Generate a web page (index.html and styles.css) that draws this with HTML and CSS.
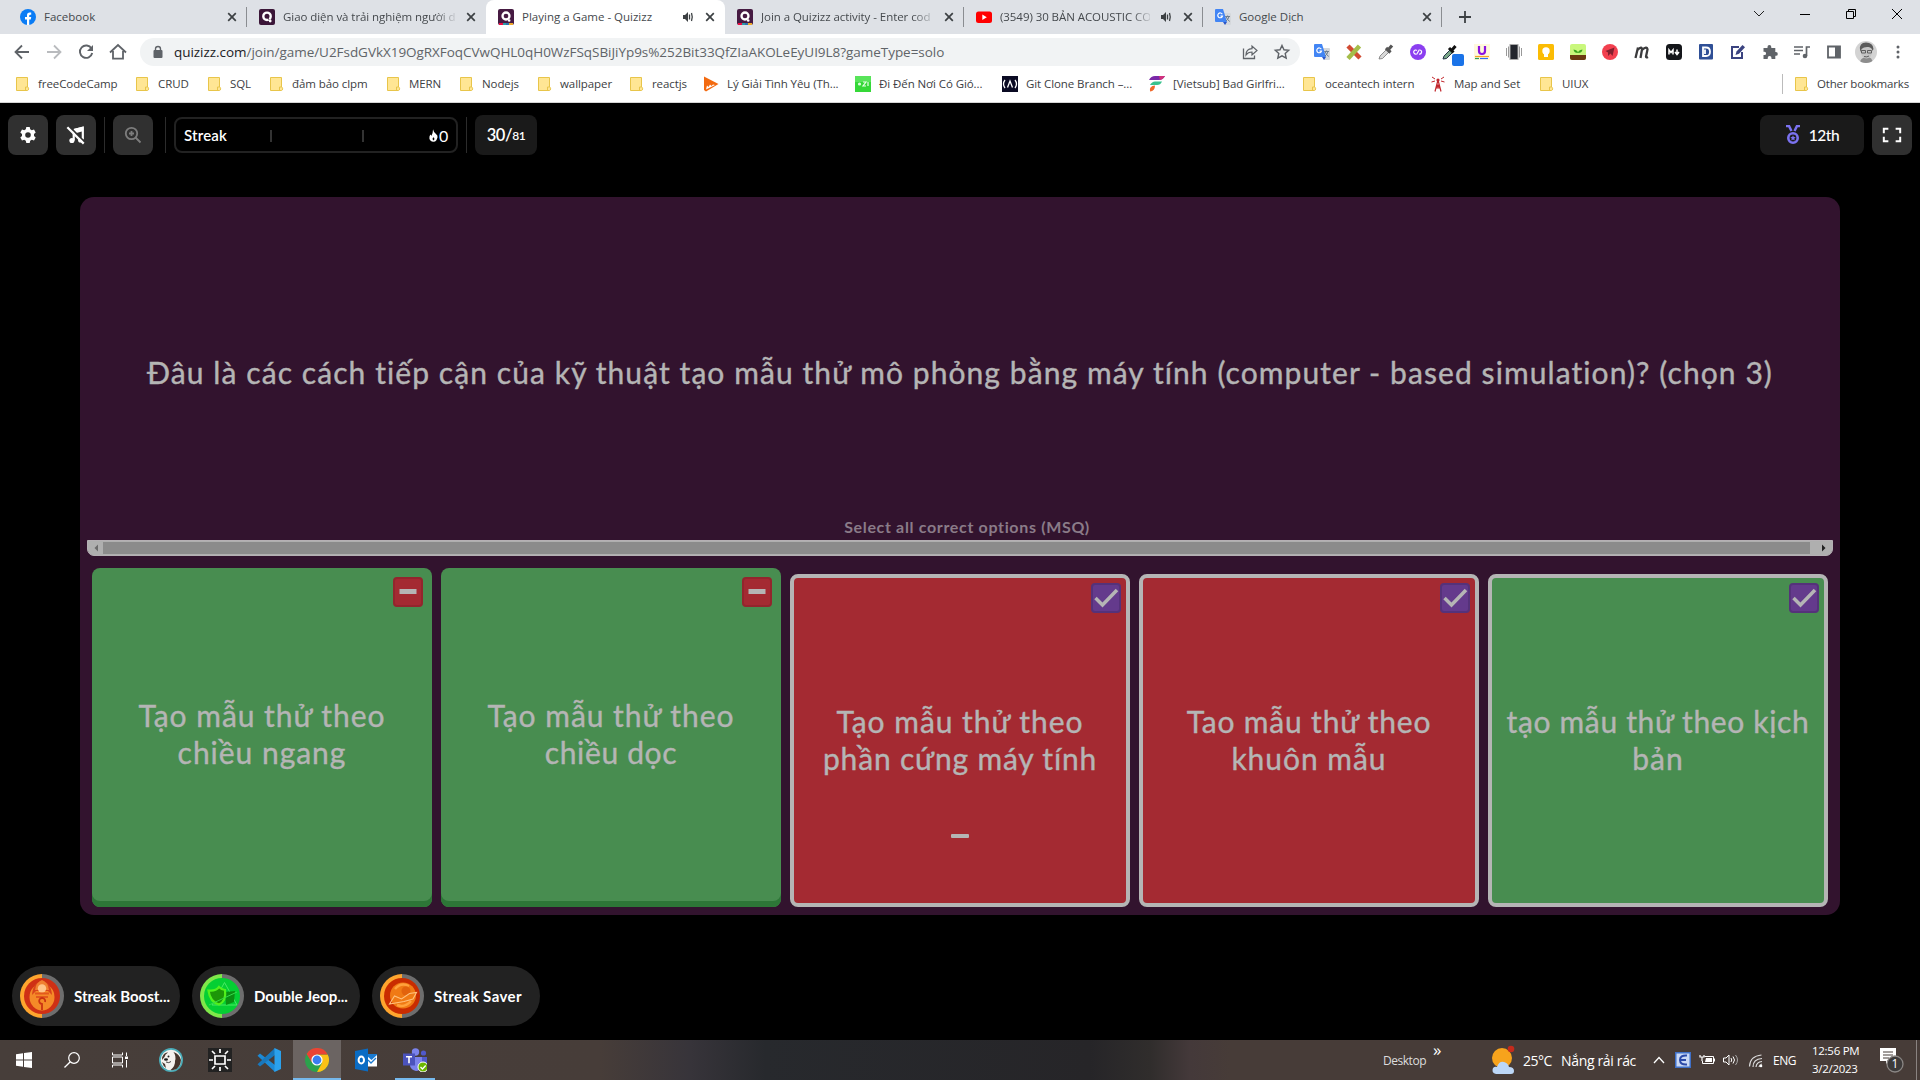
FILE: index.html
```html
<!DOCTYPE html>
<html lang="vi">
<head>
<meta charset="utf-8">
<title>Playing a Game - Quizizz</title>
<link rel="stylesheet" href="styles.css">
</head>
<body>
<svg class="defs" aria-hidden="true">
  <symbol id="folder" viewBox="0 0 16 16"><path d="M.5 1.500h11v9.500c1.500 0 1.500 3.500 0 3.500H.5z" fill="#ffe694" stroke="#e8c54a"/><path d="M9.500 14.500v-3.500h2" fill="none" stroke="#e8c54a"/></symbol>
  <symbol id="close" viewBox="0 0 16 16"><path d="M4.200 4.200l7.600 7.600M11.800 4.200l-7.600 7.600" stroke="#3c4043" stroke-width="1.700"/></symbol>
  <symbol id="audio" viewBox="0 0 16 16"><path d="M3 6v4h2l3 3V3L5 6z" fill="#3c4043"/><path d="M9.500 5.500v5M11.500 4q1.500 4 0 8" fill="none" stroke="#3c4043" stroke-width="1.300"/></symbol>
  <symbol id="quizizz" viewBox="0 0 16 16"><rect width="16" height="16" rx="2" fill="#3b1638"/><circle cx="8" cy="7.300" r="3.700" fill="none" stroke="#fff" stroke-width="2.400"/><path d="M8 8l4 5" stroke="#3b1638" stroke-width="1"/><circle cx="11.200" cy="12" r="1.400" fill="#fff"/></symbol>
  <symbol id="quizizz-live" viewBox="0 0 16 16"><rect width="16" height="16" rx="2" fill="#461a42"/><circle cx="8" cy="7" r="3.500" fill="none" stroke="#fff" stroke-width="2.300"/><circle cx="11.200" cy="11.500" r="1.300" fill="#fff"/><path d="M1 15h4" stroke="#ec0b43" stroke-width="2"/><path d="M5 15h3" stroke="#2d9da6" stroke-width="2"/><path d="M8 15h3" stroke="#2d70ae" stroke-width="2"/><path d="M11 15h4" stroke="#efa929" stroke-width="2"/></symbol>
  <symbol id="translate" viewBox="0 0 16 16"><path d="M7 4h8q1 0 1 1v10q0 1-1 1H10z" fill="#d5d8dc"/><path d="M1 0h7l4 13H1q-1 0-1-1V1q0-1 1-1z" fill="#4285f4"/><path d="M8 13h4l-2 3z" fill="#2a56c6"/><path d="M7.300 5.200A2.400 2.400 0 1 0 7.500 7H5.400" fill="none" stroke="#fff" stroke-width="1.200"/><path d="M10.200 7.500h4.800M12.600 6.500v1M14 7.500q-.7 3-3 4.500M11.300 8q1 3 3.500 4.500" fill="none" stroke="#6d7f92"/></symbol>
  <symbol id="minus" viewBox="0 0 26 26"><path d="M4.500 12.500h17" stroke="#b5b5b5" stroke-width="5"/></symbol>
  <symbol id="check" viewBox="0 0 26 26"><path d="M2.500 13l7 7L24 5" fill="none" stroke="#b5b5b5" stroke-width="3.500"/></symbol>
</svg>

<div class="screen">
  <header class="tabstrip">
    <div class="tab"><svg class="i16" viewBox="0 0 16 16"><circle cx="8" cy="8" r="8" fill="#0a7cf5"/><path d="M7 16v-5.500H5V8h2V6.300Q7 3.500 9.700 3.500l1.500.1V5.700h-1Q9.200 5.700 9.200 6.800V8h2l-.4 2.500H9.200V16z" fill="#fff"/></svg><span class="title">Facebook</span><svg class="i16"><use href="#close"/></svg></div>
    <div class="tab"><svg class="i16"><use href="#quizizz"/></svg><span class="title fade">Giao diện và trải nghiệm người d</span><svg class="i16"><use href="#close"/></svg></div>
    <div class="tab active"><svg class="i16"><use href="#quizizz-live"/></svg><span class="title">Playing a Game - Quizizz</span><svg class="i16 sound"><use href="#audio"/></svg><svg class="i16"><use href="#close"/></svg></div>
    <div class="tab"><svg class="i16"><use href="#quizizz-live"/></svg><span class="title fade">Join a Quizizz activity - Enter cod</span><svg class="i16"><use href="#close"/></svg></div>
    <div class="tab"><svg class="i16" viewBox="0 0 16 16"><rect y="2.500" width="16" height="11.500" rx="2.500" fill="#f00"/><path d="M6.300 5.500v5.500l4.500-2.700z" fill="#fff"/></svg><span class="title fade">(3549) 30 BẢN ACOUSTIC CO</span><svg class="i16 sound"><use href="#audio"/></svg><svg class="i16"><use href="#close"/></svg></div>
    <div class="tab"><svg class="i16"><use href="#translate"/></svg><span class="title">Google Dịch</span><svg class="i16"><use href="#close"/></svg></div>
    <svg class="newtab" viewBox="0 0 16 16"><path d="M8 2v12M2 8h12" stroke="#3c4043" stroke-width="1.800"/></svg>
    <div class="winctl">
      <svg viewBox="0 0 12 12"><path d="M1 3l5 5 5-5" fill="none" stroke="#222"/></svg>
      <svg viewBox="0 0 12 12"><path d="M1 6.500h10" stroke="#000"/></svg>
      <svg viewBox="0 0 12 12"><path d="M1.500 3.500h7v7h-7zM3.500 3.500v-2h7v7h-2" fill="none" stroke="#000"/></svg>
      <svg viewBox="0 0 12 12"><path d="M1 1l10 10M11 1L1 11" stroke="#000"/></svg>
    </div>
  </header>

  <div class="toolbar">
    <div class="nav">
      <svg class="i16" viewBox="0 0 16 16"><path d="M15 8H2M8 1.500L1.500 8 8 14.500" fill="none" stroke="#5f6368" stroke-width="1.800"/></svg>
      <svg class="i16" viewBox="0 0 16 16"><path d="M1 8h13M8 1.500L14.500 8 8 14.500" fill="none" stroke="#b9bbbe" stroke-width="1.800"/></svg>
      <svg class="i16" viewBox="0 0 16 16"><path d="M13.500 4.500A6.200 6.200 0 1 0 14.200 9" fill="none" stroke="#5f6368" stroke-width="1.900"/><path d="M15 1v6H9z" fill="#5f6368"/></svg>
      <svg class="i16" viewBox="0 0 16 16"><path d="M0 8.500L8 1l8 7.500M3 7v7.700h10V7" fill="none" stroke="#5f6368" stroke-width="1.800"/></svg>
    </div>
    <div class="omnibox">
      <svg class="lock" viewBox="0 0 12 14"><rect x="1.500" y="5" width="9" height="8" rx="1" fill="#5f6368"/><path d="M3.500 5.500V4a2.500 2.500 0 0 1 5 0v1.500" fill="none" stroke="#5f6368" stroke-width="1.400"/></svg>
      <span class="url"><b>quizizz.com</b>/join/game/U2FsdGVkX19OgRXFoqCVwQHL0qH0WzFSqSBiJiYp9s%252Bit33QfZIaAKOLeEyUI9L8?gameType=solo</span>
      <svg class="i16" viewBox="0 0 16 16"><path d="M1.500 4.500v10h11v-3" fill="none" stroke="#5f6368" stroke-width="1.300"/><path d="M4 11q0-6 6-6.300V2l5 4.500-5 4.500V8Q6 8 4 11z" fill="none" stroke="#5f6368" stroke-width="1.200"/></svg>
      <svg class="i16" viewBox="0 0 16 16"><path d="M8 1.500l2 4.300 4.700.5-3.500 3.200 1 4.700L8 11.800l-4.200 2.400 1-4.700L1.300 6.300 6 5.800z" fill="none" stroke="#5f6368" stroke-width="1.400"/></svg>
    </div>
    <div class="exts">
      <svg class="i16"><use href="#translate"/></svg>
      <svg class="i16" viewBox="0 0 16 16"><path d="M2 2l12 12" stroke="#d14b32" stroke-width="4.500"/><path d="M13.500 2L2 14.500" stroke="#a5bd4a" stroke-width="4.500"/></svg>
      <svg class="i16" viewBox="0 0 16 16"><path d="M1 15l1-3 7-7 2.500 2.500-7 7z" fill="#d8d8d8" stroke="#777" stroke-width=".8"/><path d="M8 4l4.500 4.500M10 6l4-4.500" stroke="#555" stroke-width="3.200"/></svg>
      <svg class="i16" viewBox="0 0 16 16"><circle cx="8" cy="8" r="8" fill="#8b3ff0"/><path d="M9.500 5.500L6.500 10.500M7 6.500A2 2 0 1 0 6 10M9 10a2 2 0 1 0 1-4" fill="none" stroke="#fff" stroke-width="1.200"/></svg>
      <svg class="i16" viewBox="0 0 16 16"><path d="M1 15l1-3 6-6 2.500 2.500-6 6z" fill="#7ba889" stroke="#234" /><path d="M7 4l4.500 4.500M10 6l3.500-4" stroke="#111" stroke-width="3"/><rect x="10" y="10" width="12" height="12" rx="2" fill="#1a73e8"/></svg>
      <svg class="i16" viewBox="0 0 16 16"><rect width="16" height="16" fill="#fff9dc"/><path d="M5 2v5q0 3 3 3t3-3V2" fill="none" stroke="#8a12e0" stroke-width="2.200"/><path d="M1 12.500h14" stroke="#f5a623" stroke-width="1.200"/><path d="M1 14.500h4" stroke="#2b9c5a" stroke-width="1.200"/><path d="M6 14.500h8" stroke="#2a6df4" stroke-width="1.200"/></svg>
      <svg class="i16" viewBox="0 0 16 16"><path d="M.5 4v8M2.500 2.500v11M13.500 2.500v11M15.500 4v8" stroke="#999"/><rect x="4" y=".5" width="8" height="15" fill="#23262d" stroke="#aaa"/></svg>
      <svg class="i16" viewBox="0 0 16 16"><rect width="16" height="16" rx="1.500" fill="#fbbc04"/><circle cx="8" cy="7" r="3.700" fill="#fff"/><path d="M6 10h4v3H6z" fill="#fff"/></svg>
      <svg class="i16" viewBox="0 0 16 16"><rect width="16" height="16" rx="2" fill="#c9f77c"/><path d="M0 11h16v3q0 2-2 2H2q-2 0-2-2z" fill="#6b3a12"/><path d="M8 11V9Q4 9 3.500 5.500 8 6 8 9q0-3 4.500-3.500Q12 9 8 9" fill="#3ca51d"/></svg>
      <svg class="i16" viewBox="0 0 16 16"><circle cx="8" cy="8" r="8" fill="#f2404f"/><path d="M12.500 3.500L10.500 12l-2-2.500L6 12V8.500L3.500 7z" fill="#84202e"/></svg>
      <svg class="i16" viewBox="0 0 16 16"><path d="M1.500 14L4 3.500M3.500 6Q8 1.500 8 5.500L6.500 14M8 6q5-4.500 5.500-.5L12 12.500q0 1.500 2 .5" fill="none" stroke="#3b3b3d" stroke-width="2.300"/></svg>
      <svg class="i16" viewBox="0 0 16 16"><rect width="16" height="16" rx="3.500" fill="#14161a"/><path d="M3 10.500V6l2 2.500L7 6v4.500M11 5.500v4M9 8l2 2.500L13 8" fill="none" stroke="#fff" stroke-width="1.500"/></svg>
      <svg class="i16" viewBox="0 0 16 16"><rect x="1" width="14" height="15.500" rx="1" fill="#2f4f96"/><path d="M5 3.500h3q4 0 4 4.300T8 12H5zM7 5.500v4.600" fill="none" stroke="#fff" stroke-width="1.800"/></svg>
      <svg class="i16" viewBox="0 0 16 16"><path d="M9 3H2v11h10V8" fill="none" stroke="#3a4380" stroke-width="2"/><path d="M5.500 11l1-3.500L12.500 1 15 3.200 9 9.800z" fill="#3a4380"/></svg>
      <svg class="i16" viewBox="0 0 16 16"><path d="M1.500 4h4V3a1.900 1.900 0 0 1 3.800 0v1h4v4h.6a1.900 1.900 0 0 1 0 3.800h-.6V15H9.500v-1a1.900 1.900 0 0 0-3.800 0v1H1.500v-4h1a1.600 1.600 0 0 0 0-3.200h-1z" fill="#5f6368"/></svg>
      <svg class="i16" viewBox="0 0 16 16"><path d="M0 3h9M0 6.500h9M0 10h6" stroke="#5f6368" stroke-width="1.700"/><path d="M12.500 12V3H16" fill="none" stroke="#5f6368" stroke-width="1.700"/><circle cx="11" cy="12" r="2.300" fill="#5f6368"/></svg>
      <svg class="i16" viewBox="0 0 16 16"><path d="M2 2.500h12v11H2z" fill="none" stroke="#5f6368" stroke-width="1.800"/><path d="M9 2h5v12H9z" fill="#5f6368"/></svg>
      <svg class="avatar" viewBox="0 0 22 22"><clipPath id="av"><circle cx="11" cy="11" r="11"/></clipPath><g clip-path="url(#av)"><path d="M0 0h22v22H0z" fill="#d3d3d3"/><path d="M5 22q0-5 6-6t7 6z" fill="#8d8d8d"/><ellipse cx="11.500" cy="10.500" rx="5.700" ry="7" fill="#c4c4c4"/><path d="M5 9Q4 1.500 11 1.500T18.500 8l-1 2Q17 6.500 13.500 6 9 5.500 6.500 8L6 11z" fill="#5a5a5a"/><path d="M6.500 9.500h4v2.500h-4zM12.500 9.500h4v2.500h-4zM9 15.500q3 1 5-.5" fill="none" stroke="#555" stroke-width=".9"/></g></svg>
      <svg class="i16" viewBox="0 0 16 16"><circle cx="8" cy="3" r="1.500" fill="#5f6368"/><circle cx="8" cy="8" r="1.500" fill="#5f6368"/><circle cx="8" cy="13" r="1.500" fill="#5f6368"/></svg>
    </div>
  </div>

  <nav class="bookmarks">
    <a class="bm b1"><svg class="i16"><use href="#folder"/></svg><span>freeCodeCamp</span></a>
    <a class="bm b2"><svg class="i16"><use href="#folder"/></svg><span>CRUD</span></a>
    <a class="bm b3"><svg class="i16"><use href="#folder"/></svg><span>SQL</span></a>
    <a class="bm b4"><svg class="i16"><use href="#folder"/></svg><span>đảm bảo clpm</span></a>
    <a class="bm b5"><svg class="i16"><use href="#folder"/></svg><span>MERN</span></a>
    <a class="bm b6"><svg class="i16"><use href="#folder"/></svg><span>Nodejs</span></a>
    <a class="bm b7"><svg class="i16"><use href="#folder"/></svg><span>wallpaper</span></a>
    <a class="bm b8"><svg class="i16"><use href="#folder"/></svg><span>reactjs</span></a>
    <a class="bm site b9"><svg class="i16" viewBox="0 0 16 16"><path d="M1 .5L15.500 8 3 15.500 1 14z" fill="#f36a10"/><path d="M3 13.500l1-4 1.500 1.500L7 8.500 8.500 10 10 8.500 12 9z" fill="#fff"/></svg><span>Lý Giải Tình Yêu (Th...</span></a>
    <a class="bm site b10"><svg class="i16" viewBox="0 0 16 16"><path d="M0 0h16v16H0z" fill="#35d838"/><path d="M0 0h16v6H0z" fill="#58e45a"/><circle cx="4.500" cy="8" r="1.600" fill="#d9ffda"/><path d="M8 6h3l-3 4h3M13 6v4" fill="none" stroke="#e6ffe6" stroke-width="1.200"/></svg><span>Đi Đến Nơi Có Gió...</span></a>
    <a class="bm site b11"><svg class="i16" viewBox="0 0 16 16"><path d="M0 0h16v16H0z" fill="#0a0a23"/><path d="M3 4Q0 8 3 12M13 4q3 4 0 8M5.500 11.500L8 5l2.500 6.500" fill="none" stroke="#fff" stroke-width="1.300"/></svg><span>Git Clone Branch –...</span></a>
    <a class="bm site b12"><svg class="i16" viewBox="0 0 16 16"><path d="M0 4Q2 0 6 0h10q-2 4-6 4z" fill="#7a28a8"/><path d="M10 0h6q-2 3.500-5 4z" fill="#d2327c"/><path d="M1 9q2-3.500 5-3.500h7Q11.500 9 8 9z" fill="#39c28d"/><path d="M1 15q-1-5 5-5.500Q6 15 1 15.500z" fill="#f0692c"/></svg><span>[Vietsub] Bad Girlfri...</span></a>
    <a class="bm b13"><svg class="i16"><use href="#folder"/></svg><span>oceantech intern</span></a>
    <a class="bm site b14"><svg class="i16" viewBox="0 0 16 16"><path d="M8 4L5 15.500M8 4l3 11.500M6.500 9h3M6 12h4M7 9l3 3M9 9l-3 3" stroke="#c2272d" stroke-width="1.200"/><path d="M2 1l3 2M1.500 6L5 5M14 1l-3 2M14.500 6L11 5" stroke="#c2272d"/><circle cx="8" cy="4" r="1.600" fill="#c2272d"/></svg><span>Map and Set</span></a>
    <a class="bm b15"><svg class="i16"><use href="#folder"/></svg><span>UIUX</span></a>
    <a class="bm other"><svg class="i16"><use href="#folder"/></svg><span>Other bookmarks</span></a>
  </nav>

  <main class="game">
    <div class="gamebar">
      <div class="btn"><svg viewBox="0 0 20 20"><path d="M8.300 2h3.400l.5 2.300 1.600.9 2.200-.8 1.700 3-1.700 1.600v2l1.700 1.600-1.700 3-2.200-.8-1.600.9-.5 2.300H8.300l-.5-2.300-1.600-.9-2.200.8-1.700-3L4 11V9L2.300 7.400l1.700-3 2.200.8 1.600-.9z" fill="#fff"/><circle cx="10" cy="10" r="2.800" fill="#303030"/></svg></div>
      <div class="btn"><svg viewBox="0 0 22 22"><path d="M8.500 5.500L18.500 3v13M8.500 6v11" fill="none" stroke="#fff" stroke-width="2.400"/><path d="M8.500 4.500L18.500 2v5l-8 2z" fill="#fff"/><circle cx="6.500" cy="17" r="2.800" fill="#fff"/><circle cx="16" cy="16.500" r="2.800" fill="#fff"/><path d="M3 1l18 18" stroke="#303030" stroke-width="2"/><path d="M1.500 2.500l18 18" stroke="#fff" stroke-width="2.400"/></svg></div>
      <i class="sep"></i>
      <div class="btn"><svg viewBox="0 0 20 20"><circle cx="8.500" cy="8.500" r="5.700" fill="none" stroke="#7d7d7d" stroke-width="1.800"/><path d="M12.500 12.500l5 5M8.500 6v5M6 8.500h5" stroke="#7d7d7d" stroke-width="1.800"/></svg></div>
      <i class="sep wide"></i>
      <div class="streak"><span>Streak</span><i class="tick"></i><i class="tick"></i><svg viewBox="0 0 10 14"><path d="M4.500 0Q5 3 7.500 5T9.500 9 8 12.500 5 14 1.500 12.500.5 8.500Q1 6.500 2 6l.6 1.500Q4.500 4 4.500 0z" fill="#fff"/><path d="M5 9q2 2 0 3.500Q3 11 5 9z" fill="#000"/></svg><span class="score">0</span></div>
      <i class="sep"></i>
      <div class="count"><span class="now">30/</span><span class="total">81</span></div>
      <div class="rank"><svg viewBox="0 0 16 20"><path d="M1 1h3l2.500 5M15 1h-3L9.500 6" fill="none" stroke="#7b72f0" stroke-width="2.500"/><circle cx="8" cy="13" r="4.700" fill="none" stroke="#7b72f0" stroke-width="2.600"/><path d="M8 10.300l.8 1.800 1.900.2-1.400 1.300.4 1.900L8 14.600l-1.700.9.4-1.900-1.400-1.300 1.900-.2z" fill="#7b72f0"/></svg><span>12th</span></div>
      <div class="btn"><svg viewBox="0 0 22 22"><path d="M7 4H2v5M15 4h5v5M7 18H2v-5M15 18h5v-5" fill="none" stroke="#fff" stroke-width="2.200"/></svg></div>
    </div>

    <section class="quiz">
      <div class="question">Đâu là các cách tiếp cận của kỹ thuật tạo mẫu thử mô phỏng bằng máy tính (computer - based simulation)? (chọn 3)</div>
      <p class="hint">Select all correct options (MSQ)</p>
      <div class="scrollbar"><svg class="arrow" viewBox="0 0 16 16"><path d="M10 4.500v7L6.500 8z" fill="#6b6b6b"/></svg><div class="thumb"></div><svg class="arrow right" viewBox="0 0 16 16"><path d="M6 4.500v7L9.500 8z" fill="#222"/></svg></div>
      <div class="options">
        <article class="card green flat"><svg class="mark miss"><use href="#minus"/></svg><p>Tạo mẫu thử theo<br>chiều ngang</p></article>
        <article class="card green flat"><svg class="mark miss"><use href="#minus"/></svg><p>Tạo mẫu thử theo<br><span class="tight">chiều dọc</span></p></article>
        <article class="card red picked"><svg class="mark pick"><use href="#check"/></svg><p>Tạo mẫu thử theo<br><span class="snug">phần cứng máy tính</span></p><i class="dash"></i></article>
        <article class="card red picked"><svg class="mark pick"><use href="#check"/></svg><p><span class="snug">Tao mẫu thử theo</span><br>khuôn mẫu</p></article>
        <article class="card green picked"><svg class="mark pick"><use href="#check"/></svg><p><span class="tight">tạo mẫu thử theo kịch</span><br>bản</p></article>
      </div>
    </section>

    <div class="powerups">
      <div class="power"><div class="ring orange"><svg viewBox="0 0 36 36"><circle cx="18" cy="18" r="18" fill="#cf3015"/><ellipse cx="18" cy="19" rx="12.500" ry="13.500" fill="#f58a28"/><path d="M8 17Q9 4 18 3q9 1 10 14l-4-4H12z" fill="#d8441a"/><path d="M18 2q6 2 7 10H11q1-8 7-10z" fill="#f08030"/><circle cx="18" cy="10.500" r="4.200" fill="#ffc488"/><path d="M11 15.500h14M12 19h12" stroke="#e3591c" stroke-width="1.800"/><path d="M18 32v-6a3 3 0 1 1 3-2" fill="none" stroke="#c93212" stroke-width="1.800"/></svg></div><span>Streak Boost...</span></div>
      <div class="power"><div class="ring lime"><svg viewBox="0 0 36 36"><circle cx="18" cy="18" r="18" fill="#05cf33"/><path d="M20.500 4.500L33 27H8z" fill="none" stroke="#4ae965"/><path d="M21 14l10-1-1 11-8 3z" fill="#0a8f12"/><path d="M4.500 12.500q7 1 10.500-3.500 3 3 6 3 1.500 11-6 14.500Q6 24 4.500 12.500z" fill="#1d9608" stroke="#52f01c" stroke-width="2.200"/><path d="M5 27L33 14" stroke="#35dd4c"/></svg></div><span>Double Jeop...</span></div>
      <div class="power"><div class="ring orange"><svg viewBox="0 0 36 36"><circle cx="18" cy="18" r="18" fill="#c92c00"/><circle cx="19" cy="17.500" r="13" fill="#f07a14"/><path d="M11 11q6-7 14-3M13 27q8 3 14-4" fill="none" stroke="#ffa23c" stroke-width="2.500"/><circle cx="22" cy="13" r="4.500" fill="#e2620c"/><path d="M5.500 26l5-8 7 3 8-5.500 7-1-3.500 6.500-9 2.500z" fill="none" stroke="#ffc27e" stroke-width="1.100"/></svg></div><span class="saver">Streak Saver</span></div>
    </div>
  </main>

  <footer class="taskbar">
    <div class="app win"><svg viewBox="0 0 16 16"><path d="M0 2.200L7 1.300V7.600H0zM8 1.100L16 0V7.600H8zM0 8.400H7V14.700L0 13.800zM8 8.400h8V16l-8-1.100z" fill="#fff"/></svg></div>
    <div class="app fl"><svg viewBox="0 0 16 16"><circle cx="10" cy="6" r="5.300" fill="none" stroke="#fff" stroke-width="1.200"/><path d="M6.300 9.700L.5 15.500" stroke="#fff" stroke-width="1.300"/></svg></div>
    <div class="app fl"><svg viewBox="0 0 16 16"><path d="M.5.500v2.500h10V.5M.5 15.500V13h10v2.500M.5 5h10v6H.5zM14.500.5V4M14.500 8v7.500" fill="none" stroke="#fff"/><path d="M13 4.500h3V7h-3z" fill="#fff"/></svg></div>
    <div class="app big a4"><svg viewBox="0 0 24 24"><circle cx="12" cy="12" r="12" fill="#4aacb8"/><circle cx="12" cy="12" r="10.300" fill="#f4f2ee"/><path d="M14.500 4q6 2 7.500 8-.5 6-4.500 9-3 1.500-6 1 5-4 4.500-9 1.500-5-1.500-9z" fill="#46352c"/><path d="M5 6q2-2 4-1.500Q6 6 5.500 9L3 12q0-4 2-6zM3 14l3 2 1 4q-3-2-4-6z" fill="#46352c"/><circle cx="9.500" cy="8.500" r="1" fill="#222"/><ellipse cx="7" cy="11.500" rx="2" ry="1.300" fill="#1c1c1c"/><path d="M7 14q3 1.500 5-.5" fill="none" stroke="#444"/></svg></div>
    <div class="app big"><svg viewBox="0 0 24 24"><path d="M0 0h24v24H0z" fill="#222"/><path d="M7 8h10v8H7zM12 1v4M12 19v4M1 12h4M19 12h4M4 3l3 3M20 3l-3 3M4 21l3-3M20 21l-3-3" fill="none" stroke="#fff" stroke-width="1.700"/></svg></div>
    <div class="app big"><svg viewBox="0 0 24 24"><path d="M18 24v-7L3 5.500.5 7.700z" fill="#1c8ad6"/><path d="M18 0v7L3 18.500.5 16.300z" fill="#1878bd"/><path d="M17.500 0L24 3v18l-6.500 3z" fill="#2ba1ec"/></svg></div>
    <div class="app big on"><svg viewBox="0 0 24 24"><circle cx="12" cy="12" r="12" fill="#2ba24c"/><path d="M12 6.500h10.700A12 12 0 0 1 12 24l5-9z" fill="#fbc116"/><path d="M1.600 6A12 12 0 0 1 22.700 6.500H12L7 9.500 6.800 14.500z" fill="#ea4335"/><circle cx="12" cy="12" r="5.600" fill="#fff"/><circle cx="12" cy="12" r="4.400" fill="#3a7df0"/></svg></div>
    <div class="app big"><svg viewBox="0 0 24 24"><path d="M12 6.500h11v12H12z" fill="#fff"/><path d="M12 7l5.500 5L23 7v-1H12z" fill="#1a7ad0"/><path d="M14 12l3 3 5-5" fill="none" stroke="#1a7ad0" stroke-width="1.300"/><path d="M1 3l13-2.500v23L1 21z" fill="#0a6cc4"/><ellipse cx="7.300" cy="12" rx="2.700" ry="3.500" fill="none" stroke="#fff" stroke-width="2"/></svg></div>
    <div class="app big run"><svg viewBox="0 0 24 24"><circle cx="12.500" cy="4" r="3.700" fill="#7b83eb"/><circle cx="20.500" cy="5" r="2.600" fill="#5059c9"/><path d="M17 9h7v8q-3 4-7 1z" fill="#5059c9"/><path d="M8 9h11v9q-2 5-6 5-5-1-6-5z" fill="#7b83eb"/><path d="M0 5.500h12v12H0z" fill="#4b53bc"/><path d="M3 8.700h6M6 8.700v6.500" stroke="#fff" stroke-width="1.600"/><circle cx="20" cy="19" r="5" fill="#6bb700" stroke="#fff"/><path d="M17.500 19l2 2 3.200-3.500" fill="none" stroke="#fff" stroke-width="1.300"/></svg></div>

    <div class="tray">
      <span class="desktop">Desktop</span><span class="more">»</span>
      <svg class="weather" viewBox="0 0 24 30"><circle cx="11" cy="13" r="10" fill="#f7a31c"/><circle cx="20" cy="4" r="3.300" fill="#c42b1c"/><path d="M5 29q-5-1-3-6 2-2 4-1 2-6 7-5 4 1 5 5 5 0 5 4 0 3-3 3z" fill="#bcd7f7"/></svg>
      <span class="temp">25°C</span><span class="cond">Nắng rải rác</span>
      <svg class="caret" viewBox="0 0 12 8"><path d="M1 7l5-5.500L11 7" fill="none" stroke="#fff" stroke-width="1.300"/></svg>
      <svg class="i16 uni" viewBox="0 0 16 16"><path d="M0 0h16v16H0z" fill="#3f70c8"/><path d="M1.500 1.500h13v13h-13z" fill="#c9d8f5"/><path d="M12 3.500Q5 3 5 8t7 4.500M5 8h6" fill="none" stroke="#2a49a8" stroke-width="2"/></svg>
      <svg class="i16 bat" viewBox="0 0 16 16"><path d="M5.500 4.500h9v7H3.500V9" fill="none" stroke="#fff"/><path d="M7 6h6v4H6zM15 6.500h1v3h-1z" fill="#fff"/><path d="M1 3v2h4V3M3 5v4" fill="none" stroke="#fff" stroke-width="1.200"/></svg>
      <svg class="i16 vol" viewBox="0 0 16 16"><path d="M.5 6v4H3l3 3V3L3 6zM8 6q1.500 2 0 4M10 4.500q3 3.500 0 7" fill="none" stroke="#fff"/><path d="M12.500 3q4 5 0 10" fill="none" stroke="#aaa"/></svg>
      <svg class="i16 wifi" viewBox="0 0 16 16"><path d="M1.500 14.500Q2 4 13.500 3M5 15Q5 7 14 6.500M8 15q.5-5 6-5.500M11 15q.5-2.500 3-3" fill="none" stroke="#ddd" stroke-width="1.200"/><circle cx="13" cy="14" r="1.300" fill="#fff"/></svg>
      <span class="lang">ENG</span>
      <div class="clock"><span>12:56 PM</span><span>3/2/2023</span></div>
      <svg class="notif" viewBox="0 0 26 28"><path d="M1 2h16v13H10l-3 3v-3H1z" fill="#fff"/><path d="M4 6h10M4 9h10M4 12h6" stroke="#473d39" stroke-width="1.200"/><circle cx="16" cy="18" r="8" fill="#3d3a3a" stroke="#8a8684" stroke-width="1.300"/><text x="16" y="22" text-anchor="middle">1</text></svg>
      <i class="edge"></i>
    </div>
  </footer>
</div>
</body>
</html>
```
FILE: styles.css
```css
* { box-sizing: border-box; }
body { margin: 0; background: #000; font-family: "Open Sans", "Noto Sans", sans-serif; }
p { margin: 0; }
svg { display: block; flex: none; }
.defs { position: absolute; width: 0; height: 0; }
.screen { width: 1920px; height: 1080px; display: flex; flex-direction: column; overflow: hidden; }
.i16 { width: 16px; height: 16px; overflow: visible; }

/* browser chrome */
.tabstrip { height: 34px; background: #dee1e6; display: flex; align-items: center; padding-left: 8px; font-size: 11.5px; color: #45494d; }
.tab { width: 239px; height: 34px; display: flex; align-items: center; padding: 0 7px 0 12px; gap: 8px; white-space: nowrap; background: linear-gradient(#8a8d91, #8a8d91) right center / 1px 20px no-repeat; }
.tab .title { flex: 1; min-width: 0; overflow: hidden; padding-bottom: 2px; }
.tab .title.fade { letter-spacing: -.06px; -webkit-mask-image: linear-gradient(90deg, #000 88%, rgba(0, 0, 0, .15) 100%); mask-image: linear-gradient(90deg, #000 88%, rgba(0, 0, 0, .15) 100%); }
.tab .sound { margin-right: -2px; }
.tab.active { background: #fff; border-radius: 8px 8px 0 0; }
.tab:nth-child(2), .tab:nth-child(3) { background-image: none; }
.newtab { width: 16px; height: 16px; margin-left: 15px; }
.winctl { margin: 0 17px 6px auto; display: flex; gap: 34px; }
.winctl svg { width: 12px; height: 12px; }
.toolbar { height: 36px; background: #fff; display: flex; align-items: center; }
.nav { width: 140px; padding-left: 14px; display: flex; gap: 16px; }
.omnibox { width: 1160px; height: 28px; border-radius: 14px; background: #f1f3f4; display: flex; align-items: center; gap: 16px; padding: 0 10px 0 12px; }
.lock { width: 12px; height: 14px; margin-right: -6px; }
.url { flex: 1; font-size: 13.5px; letter-spacing: -.04px; color: #606468; white-space: nowrap; }
.url b { font-weight: 400; color: #202124; }
.exts { display: flex; align-items: center; gap: 16px; padding-left: 14px; }
.avatar { width: 22px; height: 22px; margin: 0 -3px; }
.bookmarks { height: 33px; background: #fff; border-bottom: 1px solid #d5d5d5; display: flex; align-items: center; padding: 0 8px 4px 16px; font-size: 11.5px; letter-spacing: -.08px; color: #3c4043; }
.bm { display: flex; align-items: center; gap: 6px; white-space: nowrap; }
.bm span { padding-bottom: 2px; }
.bm.site { gap: 8px; }
.b1 { width: 120px; } .b2 { width: 72px; } .b3 { width: 62px; } .b4 { width: 117px; }
.b5 { width: 73px; } .b6 { width: 78px; } .b7 { width: 92px; } .b8 { width: 73px; }
.b9 { width: 152px; } .b10 { width: 147px; } .b11 { width: 147px; } .b12 { width: 154px; }
.b13 { width: 127px; } .b14 { width: 110px; } .b15 { width: 60px; }
.other { margin-left: auto; width: 130px; padding-left: 12px; border-left: 1px solid #bbb; height: 20px; letter-spacing: -.16px; }

/* game */
.game { height: 937px; background: #000; color: #fff; font-family: Lato, Inter, sans-serif; display: flex; flex-direction: column; }
.gamebar { height: 94px; padding: 12px 8px 0; display: flex; align-items: flex-start; gap: 8px; }
.btn { width: 40px; height: 40px; border-radius: 8px; background: #303030; display: grid; place-items: center; }
.btn svg { width: 20px; height: 20px; }
.sep { width: 1px; height: 36px; margin-top: 2px; background: #2c2c2c; }
.sep.wide { margin-left: 4px; }
.streak { width: 284px; height: 36px; margin-top: 2px; border: 2px solid #222; border-radius: 8px; display: grid; grid-template-columns: 86px 92px 67px 10px auto; align-items: center; padding-left: 8px; font-size: 15px; font-weight: 600; letter-spacing: .18px; }
.streak svg { width: 9px; height: 13px; }
.streak .score { font-size: 16px; font-weight: 400; }
.tick { width: 2px; height: 12px; background: #333; margin-top: 2px; }
.count { width: 62px; height: 40px; border-radius: 8px; background: #1a1a1a; display: flex; align-items: center; justify-content: center; font-weight: 600; letter-spacing: -.4px; }
.now { font-size: 16.5px; } .total { font-size: 12px; }
.rank { width: 104px; height: 40px; border-radius: 8px; background: #1a1a1a; margin-left: auto; display: flex; align-items: center; justify-content: center; gap: 8px; font-size: 15.5px; font-weight: 500; letter-spacing: -.4px; }
.rank svg { width: 16px; height: 20px; }
.quiz { width: 1760px; height: 718px; margin-left: 80px; border-radius: 14px; background: #32132e; color: #b5b5b5; display: flex; flex-direction: column; padding: 0 7px; }
.question { height: 319px; padding-top: 156px; text-align: center; font-size: 30px; line-height: 38px; letter-spacing: 1.08px; white-space: nowrap; -webkit-text-stroke: .4px #b5b5b5; }
.hint { height: 24px; line-height: 22px; text-align: center; padding-left: 14px; font-size: 16px; font-weight: 700; letter-spacing: .66px; color: #8a7b88; }
.scrollbar { height: 16px; border: 1px solid #b5b0b4; background: #afafaf; border-radius: 0 0 7px 7px; display: flex; align-items: center; }
.arrow { width: 16px; height: 16px; }
.thumb { flex: 1; height: 12px; background: #8b8b8b; margin-right: 6px; margin-left: -1px; }
.options { height: 339px; margin-top: 12px; padding: 0 5px; display: grid; grid-template-columns: repeat(5, 340px); gap: 9px; }
.card { position: relative; border-radius: 8px; display: flex; align-items: center; justify-content: center; text-align: center; font-size: 30px; line-height: 37px; letter-spacing: .97px; white-space: nowrap; -webkit-text-stroke: .4px #b5b5b5; }
.card p { padding-bottom: 1px; }
.tight { letter-spacing: .65px; }
.snug { letter-spacing: .82px; }
.green { background: #488d50; } .red { background: #a42a32; }
.flat { box-shadow: inset 0 -6px #2d7637; padding-bottom: 6px; }
.picked { margin-top: 6px; border: 4px solid #b5b5b5; }
.mark { position: absolute; top: 9px; right: 9px; width: 30px; height: 30px; border-radius: 4px; -webkit-text-stroke: 0; }
.picked .mark { top: 5px; right: 5px; }
.miss { background: #a42a32; border: 2px solid #93252d; }
.pick { background: #643a8c; border: 2px solid #55327a; }
.dash { position: absolute; left: 157px; top: 256px; width: 18px; height: 4px; background: #b5b5b5; border-radius: 1px; }
.powerups { padding: 51px 12px 0; display: flex; gap: 12px; }
.power { width: 168px; height: 60px; border-radius: 30px; background: #222; display: flex; align-items: center; gap: 10px; padding-left: 8px; font-size: 15px; font-weight: 700; white-space: nowrap; }
.saver { letter-spacing: .42px; }
.ring { width: 44px; height: 44px; border-radius: 50%; padding: 4px; flex: none; }
.orange { background: linear-gradient(90deg, #ffa52e 50%, #6e6e6e 50%); }
.lime { background: linear-gradient(90deg, #7fe84a 50%, #6e6e6e 50%); }
.ring svg { width: 36px; height: 36px; }

/* taskbar */
.taskbar { height: 40px; display: flex; color: #fff; background: linear-gradient(90deg, #473e3a 0, #473d39 600px, #37343a 690px, #27292d 765px, #262528 1090px, #302d2c 1150px, #44393a 1190px, #473c38 1230px); }
.app { width: 48px; flex: none; display: grid; place-items: center; }
.app.win svg, .app.fl svg { width: 16px; height: 16px; }
.app.a4 { margin-left: 2px; }
.app.big { width: 49px; }
.app.big svg { width: 24px; height: 24px; }
.app.on { background: #6b6462; border-bottom: 2px solid #76b9ed; width: 48px; padding-top: 2px; }
.app.run { background: linear-gradient(#76b9ed, #76b9ed) center bottom / 40px 2px no-repeat; }
.tray { flex: 1; display: flex; align-items: center; font-size: 12px; white-space: nowrap; }
.tray > * { flex: none; }
.desktop { width: 50px; margin-left: 944px; color: #ddd; letter-spacing: -.47px; }
.more { font-size: 17px; width: 58px; margin-top: -22px; }
.weather { width: 24px; height: 30px; margin-right: 8px; }
.temp { font-size: 14px; width: 38px; letter-spacing: -.46px; }
.cond { font-size: 14px; width: 92px; letter-spacing: -.34px; }
.caret { width: 12px; height: 8px; }
.uni { margin-left: 10px; } .bat { margin-left: 8px; } .vol { margin-left: 8px; } .wifi { margin-left: 9px; }
.lang { margin-left: 9px; width: 39px; letter-spacing: -.48px; }
.clock { width: 67px; display: grid; line-height: 18px; font-size: 11.5px; letter-spacing: -.28px; }
.notif { width: 26px; height: 28px; font-size: 12px; fill: #fff; }
.edge { width: 1px; height: 40px; background: #8a8381; margin-left: 11px; }
```
